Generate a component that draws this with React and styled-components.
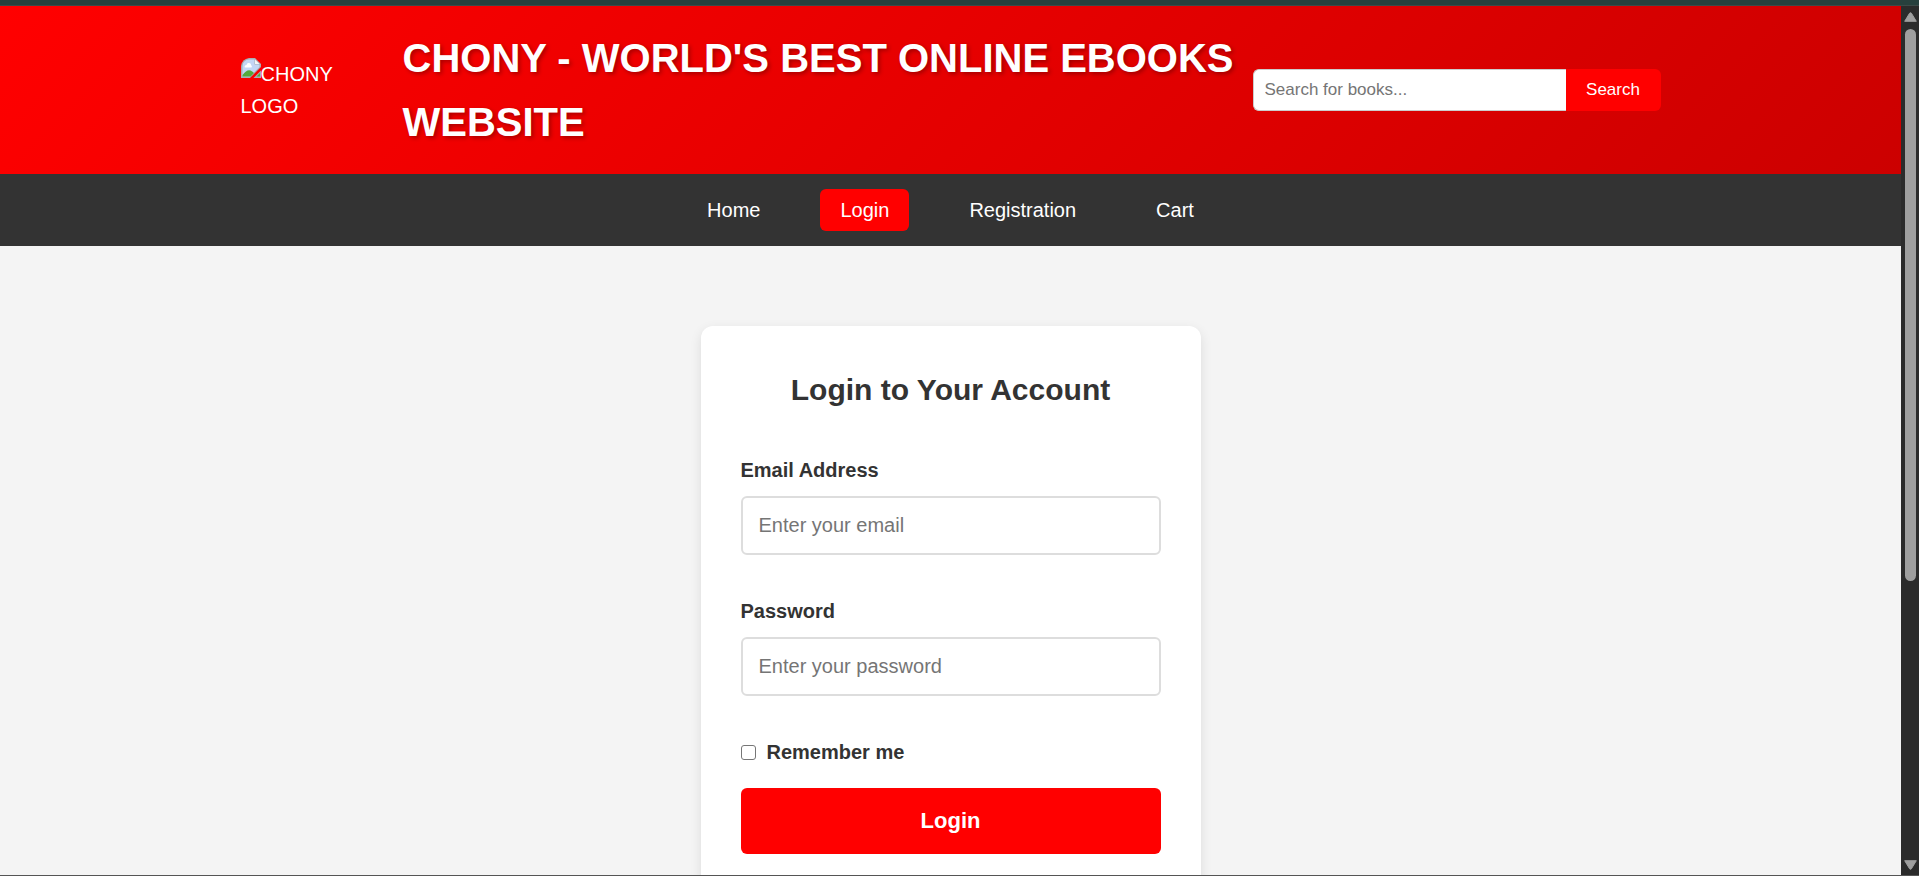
import React from 'react';
import styled, { createGlobalStyle } from 'styled-components';

const GlobalStyle = createGlobalStyle`
  * { box-sizing: border-box; margin: 0; padding: 0; }
  body, button, input { font-family: "Liberation Sans", Arial, sans-serif; }
  body { font-size: 20px; line-height: 32px; color: #333; }
`;

const Screen = styled.div`
  display: flex;
  flex-direction: column;
  height: 100vh;
  border-top: 5px solid #27403d;
  border-bottom: 1px solid #555;
`;

const Browser = styled.div`
  display: flex;
  flex: 1;
  min-height: 0;
  border-top: 1px solid #3c4a48;
`;

const Page = styled.div`
  flex: 1;
  min-width: 0;
  overflow-y: auto;
  scrollbar-width: none;
  background: #f4f4f4;
`;

const Header = styled.header`
  padding: 20px;
  background: linear-gradient(135deg, #ff0000, #cc0000);
  color: #fff;
`;

const HeaderInner = styled.div`
  display: flex;
  align-items: center;
  max-width: 1420px;
  margin: 0 auto;
`;

const Logo = styled.a`
  flex: none;
  width: 100px;
  margin-right: 62px;
  color: #fff;
  text-decoration: none;

  svg { vertical-align: top; }
`;

const SiteTitle = styled.h1`
  flex: 1;
  font-size: 40px;
  line-height: 64px;
  text-shadow: 2px 2px 4px rgba(0, 0, 0, 0.3);
`;

const SearchForm = styled.form`
  display: flex;
  flex: none;
  height: 42px;
`;

const SearchInput = styled.input`
  width: 313px;
  padding: 0 11px;
  border: 1px solid #ccc;
  border-right: 0;
  border-radius: 6px 0 0 6px;
  background: #fff;
  font-size: 17px;
  &::placeholder { color: #757575; }
`;

const SearchButton = styled.button`
  width: 95px;
  border: 0;
  border-radius: 0 6px 6px 0;
  background: #ff0000;
  color: #fff;
  font-size: 17px;
  cursor: pointer;
`;

const Nav = styled.nav`
  padding: 15px 20px;
  background: #333;
`;

const NavList = styled.ul`
  display: flex;
  justify-content: center;
  gap: 40px;
  list-style: none;
`;

const NavLink = styled.a`
  display: block;
  padding: 5px 20px;
  border-radius: 6px;
  background: ${({ $active }) => ($active ? '#ff0000' : 'transparent')};
  color: #fff;
  text-decoration: none;
`;

const Main = styled.main`
  padding: 80px 20px;
`;

const Card = styled.form`
  max-width: 500px;
  margin: 0 auto;
  padding: 40px;
  border-radius: 12px;
  background: #fff;
  box-shadow: 0 4px 12px rgba(0, 0, 0, 0.1);
`;

const CardTitle = styled.h2`
  margin-bottom: 40px;
  font-size: 30px;
  line-height: 48px;
  text-align: center;
`;

const Field = styled.div`
  display: flex;
  flex-direction: column;
  gap: 10px;
  margin-bottom: 40px;
`;

const Label = styled.label`
  font-weight: bold;
`;

const TextInput = styled.input`
  width: 100%;
  height: 59px;
  padding: 0 16px;
  border: 2px solid #ddd;
  border-radius: 6px;
  background: #fff;
  font-size: 20px;
  &::placeholder { color: #757575; }
`;

const Remember = styled.div`
  display: flex;
  align-items: center;
  gap: 11px;
  margin-bottom: 20px;
`;

const Checkbox = styled.input`
  appearance: none;
  width: 15px;
  height: 15px;
  border: 1px solid #767676;
  border-radius: 3px;
  background: #fff;
  &:checked { background: #ff0000; }
`;

const SubmitButton = styled.button`
  width: 100%;
  height: 66px;
  border: 0;
  border-radius: 6px;
  background: #ff0000;
  color: #fff;
  font-size: 22px;
  font-weight: bold;
  cursor: pointer;
`;

const ScrollRail = styled.div`
  display: flex;
  flex: none;
  flex-direction: column;
  align-items: center;
  gap: 7px;
  width: 18px;
  padding: 6px 0 5px 1px;
  background: #2b2b2b;

  svg { display: block; }
`;

const Track = styled.div`
  flex: 1;
`;

const Thumb = styled.div`
  width: 11px;
  height: 67%;
  border-radius: 6px;
  background: #9f9f9f;
`;

const BrokenImage = () => (
  <svg width="20" height="20" viewBox="0 0 20 20" aria-hidden="true">
    <path d="M0 20V8Q1 1 8 0H14L20 6V9L9 20Z" fill="#a8adb3" />
    <path d="M1.5 18.5V8Q2 2 8 1.5H13.5V6.5H18.5V9L9 18.5Z" fill="#c3d6f5" />
    <path d="M3.5 9Q3.5 7 5.5 7Q6 4.5 8 5Q10 5 10.2 7.3Q11.5 8 10.5 9.5H4Z" fill="#fff" />
    <path d="M1.5 18.5V17Q6 11 9.5 12.5Q12 13.5 13 15L9.5 18.5Z" fill="#55a83c" />
    <path d="M14 1.5V6H18.5Z" fill="#f4f6f8" />
    <path d="M20 12.5V20H12.5Z" fill="#a8adb3" />
    <path d="M19 15V18.5H15.5Z" fill="#55a83c" />
  </svg>
);

const Arrow = ({ down }) => (
  <svg width="13" height="10" viewBox="0 0 13 10" aria-hidden="true">
    <path
      d={down ? 'M.7 .7H12.3L7.4 8.8Q6.5 9.8 5.6 8.8Z' : 'M.7 9.3H12.3L7.4 1.2Q6.5 .2 5.6 1.2Z'}
      fill="#9f9f9f" stroke="#9f9f9f" strokeLinejoin="round"
    />
  </svg>
);

const links = ['Home', 'Login', 'Registration', 'Cart'];

export default function App() {
  return (
    <Screen>
      <GlobalStyle />
      <Browser>
        <Page>
          <Header>
            <HeaderInner>
              <Logo href="#home"><BrokenImage />CHONY LOGO</Logo>
              <SiteTitle>CHONY - WORLD'S BEST ONLINE EBOOKS WEBSITE</SiteTitle>
              <SearchForm role="search" onSubmit={(e) => e.preventDefault()}>
                <SearchInput type="text" placeholder="Search for books..." aria-label="Search for books" />
                <SearchButton type="submit">Search</SearchButton>
              </SearchForm>
            </HeaderInner>
          </Header>
          <Nav>
            <NavList>
              {links.map((name) => (
                <li key={name}>
                  <NavLink href={`#${name.toLowerCase()}`} $active={name === 'Login'}>{name}</NavLink>
                </li>
              ))}
            </NavList>
          </Nav>
          <Main>
            <Card onSubmit={(e) => e.preventDefault()}>
              <CardTitle>Login to Your Account</CardTitle>
              <Field>
                <Label htmlFor="email">Email Address</Label>
                <TextInput id="email" type="email" placeholder="Enter your email" />
              </Field>
              <Field>
                <Label htmlFor="password">Password</Label>
                <TextInput id="password" type="password" placeholder="Enter your password" />
              </Field>
              <Remember>
                <Checkbox id="remember" type="checkbox" />
                <Label htmlFor="remember">Remember me</Label>
              </Remember>
              <SubmitButton type="submit">Login</SubmitButton>
            </Card>
          </Main>
        </Page>
        <ScrollRail aria-hidden="true">
          <Arrow />
          <Track><Thumb /></Track>
          <Arrow down />
        </ScrollRail>
      </Browser>
    </Screen>
  );
}
